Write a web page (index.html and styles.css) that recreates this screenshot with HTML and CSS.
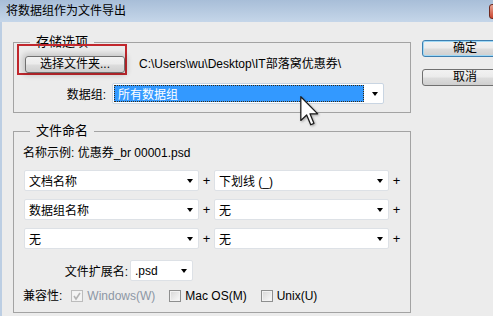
FILE: index.html
```html
<!DOCTYPE html>
<html lang="zh">
<head>
    <meta charset="UTF-8">
    <title>将数据组作为文件导出</title>
    <link rel="stylesheet" href="styles.css">
</head>
<body>
    <div class="window">
        <!-- Barra de título -->
        <div class="titlebar">
            <span class="title">将数据组作为文件导出</span>
            <span class="close"></span>
        </div>

        <div class="main">
            <div class="groups">
                <!-- 存储选项 -->
                <fieldset class="group group-save">
                    <legend>存储选项</legend>
                    <div class="folder-row">
                        <div class="highlight">
                            <button class="btn folder-btn">选择文件夹...</button>
                        </div>
                        <span class="path">C:\Users\wu\Desktop\IT部落窝优惠券\</span>
                    </div>
                    <div class="field-row">
                        <span class="field-label">数据组:</span>
                        <div class="select select-wide focused">
                            <span class="selected">所有数据组</span>
                            <span class="arrow"></span>
                        </div>
                    </div>
                </fieldset>

                <!-- 文件命名 -->
                <fieldset class="group group-name">
                    <legend>文件命名</legend>
                    <div class="example">名称示例: 优惠券_br 00001.psd</div>

                    <div class="name-grid">
                        <div class="name-row">
                            <div class="select select-name"><span>文档名称</span><span class="arrow"></span></div>
                            <span class="plus">+</span>
                            <div class="select select-name"><span>下划线 (_)</span><span class="arrow"></span></div>
                            <span class="plus">+</span>
                        </div>
                        <div class="name-row">
                            <div class="select select-name"><span>数据组名称</span><span class="arrow"></span></div>
                            <span class="plus">+</span>
                            <div class="select select-name"><span>无</span><span class="arrow"></span></div>
                            <span class="plus">+</span>
                        </div>
                        <div class="name-row">
                            <div class="select select-name"><span>无</span><span class="arrow"></span></div>
                            <span class="plus">+</span>
                            <div class="select select-name"><span>无</span><span class="arrow"></span></div>
                            <span class="plus">+</span>
                        </div>
                    </div>

                    <div class="ext-row">
                        <span class="ext-label">文件扩展名:</span>
                        <div class="select select-ext"><span>.psd</span><span class="arrow"></span></div>
                    </div>

                    <div class="compat-row">
                        <span class="compat-label">兼容性:</span>
                        <span class="option disabled">
                            <span class="check checked">
                                <svg width="10" height="10" viewBox="0 0 10 10"><polyline points="2,5 4,8 8,2" fill="none" stroke="#b4b4b4" stroke-width="1.6"/></svg>
                            </span>
                            Windows(W)
                        </span>
                        <span class="option"><span class="check"></span>Mac OS(M)</span>
                        <span class="option"><span class="check"></span>Unix(U)</span>
                    </div>
                </fieldset>
            </div>

            <!-- Botones -->
            <div class="actions">
                <button class="btn action default">确定</button>
                <button class="btn action">取消</button>
            </div>
        </div>

        <!-- Cursor del ratón -->
        <svg class="cursor" width="19" height="30" viewBox="0 0 12 19">
            <polygon points="0.5,0.5 0.5,15.5 4.2,12 6.8,18.2 8.8,17.3 6.3,11.3 11.2,11.3" fill="#fff" stroke="#1a1a1a" stroke-width="0.8" stroke-linejoin="round"/>
        </svg>
    </div>
</body>
</html>
```

FILE: styles.css
```css
/* Estilos generales */
body {
    margin: 0;
    width: 493px;
    height: 316px;
    overflow: hidden;
    background-color: #ececec;
    font-family: "Liberation Sans", "Noto Sans CJK SC", sans-serif;
    font-size: 12px;
    color: #000;
}

.window {
    position: relative;
    height: 316px;
}

/* Barra de título */
.titlebar {
    height: 22px;
    display: flex;
    align-items: center;
    padding-left: 6px;
    overflow: hidden;
    background: linear-gradient(#a8bed8, #c5d6e9);
}

.title {
    flex: 1;
    line-height: 22px;
}

.close {
    width: 40px;
    height: 15px;
    margin-right: -36px;
    box-sizing: border-box;
    border: 1px solid #6e2a20;
    border-radius: 3px;
    background: linear-gradient(#e7a594, #c9452f);
}

/* Contenido */
.main {
    display: flex;
    height: 294px;
    box-sizing: border-box;
    padding: 12px 0 0 11px;
    border-left: 2px solid #bccee3;
}

.groups {
    width: 398px;
    flex-shrink: 0;
}

.group {
    margin: 0;
    padding: 0 0 8px;
    min-width: 0;
    border: 1px solid #a3a3a3;
}

.group legend {
    margin-left: 16px;
    padding: 0 6px;
    font-size: 13px;
    line-height: 16px;
}

.group-name {
    margin-top: 10px;
}

/* Carpeta */
.folder-row {
    display: flex;
    align-items: flex-end;
    margin: -6px 0 0 3px;
}

.highlight {
    width: 110px;
    height: 31px;
    box-sizing: border-box;
    border: 2px solid #c1272d;
    padding: 10px 0 0 6px;
}

.path {
    margin: 0 0 2px 12px;
    line-height: 17px;
    white-space: nowrap;
}

/* Botones */
.btn {
    padding: 0;
    font-family: inherit;
    font-size: 12px;
    color: #000;
    border: 1px solid #707070;
    border-radius: 3px;
    background: linear-gradient(#f2f2f2 0%, #ebebeb 48%, #dddddd 52%, #cfcfcf 100%);
}

.folder-btn {
    width: 100px;
    height: 17px;
    line-height: 15px;
    box-shadow: 0 0 5px 3px rgba(0, 0, 0, 0.14);
}

.actions {
    display: flex;
    flex-direction: column;
    gap: 12px;
    margin: 6px 0 0 11px;
    flex-shrink: 0;
}

.action {
    width: 86px;
    height: 17px;
    line-height: 15px;
}

.action.default {
    border-color: #3c7fb1;
    box-shadow: inset 0 0 0 1px #9fd8f5;
}

/* Selects */
.field-row {
    display: flex;
    align-items: center;
    margin-top: 8px;
}

.field-label {
    width: 92px;
    margin-right: 6px;
    text-align: right;
}

.select {
    height: 21px;
    box-sizing: border-box;
    display: flex;
    align-items: center;
    justify-content: space-between;
    padding: 0 5px 0 4px;
    background-color: #fff;
    border: 1px solid #dde1e6;
    border-radius: 2px;
    white-space: nowrap;
}

.select-wide {
    width: 272px;
}

.select.focused {
    padding: 1px 5px 1px 1px;
    border-color: #c9d5e2;
}

.selected {
    flex: 1;
    align-self: stretch;
    display: flex;
    align-items: center;
    margin-right: 8px;
    padding-left: 3px;
    color: #fff;
    background-color: #3399ff;
    border: 1px dotted #3a2a10;
}

.arrow {
    width: 0;
    height: 0;
    border-left: 3.5px solid transparent;
    border-right: 3.5px solid transparent;
    border-top: 4px solid #000;
}

/* Nombre de archivo */
.example {
    margin: 6px 0 0 9px;
    line-height: 16px;
}

.name-grid {
    display: flex;
    flex-direction: column;
    gap: 8px;
    margin: 9px 0 0 10px;
}

.name-row {
    display: flex;
    align-items: center;
}

.select-name {
    width: 175px;
}

.plus {
    width: 15px;
    text-align: center;
    font-size: 13px;
}

.ext-row {
    display: flex;
    align-items: center;
    margin: 11px 0 0 10px;
}

.ext-label {
    width: 104px;
    margin-right: 2px;
    text-align: right;
}

.select-ext {
    width: 63px;
}

/* Compatibilidad */
.compat-row {
    display: flex;
    align-items: center;
    margin: 7px 0 0 9px;
    line-height: 16px;
}

.compat-label {
    margin-right: 9px;
}

.option {
    display: flex;
    align-items: center;
    gap: 4px;
    margin-right: 14px;
}

.option.disabled {
    color: #8d97a5;
}

.check {
    width: 12px;
    height: 12px;
    box-sizing: border-box;
    display: flex;
    align-items: center;
    justify-content: center;
    border: 1px solid #8e8f8f;
    background: linear-gradient(135deg, #d6d6d6, #fbfbfb);
    box-shadow: inset 0 0 0 1px #f2f2f2;
}

.check.checked {
    border-color: #bcbcbc;
    background: #f4f4f4;
}

/* Cursor */
.cursor {
    position: absolute;
    left: 300px;
    top: 96px;
    filter: drop-shadow(1px 1px 1px rgba(0, 0, 0, 0.3));
}
```
